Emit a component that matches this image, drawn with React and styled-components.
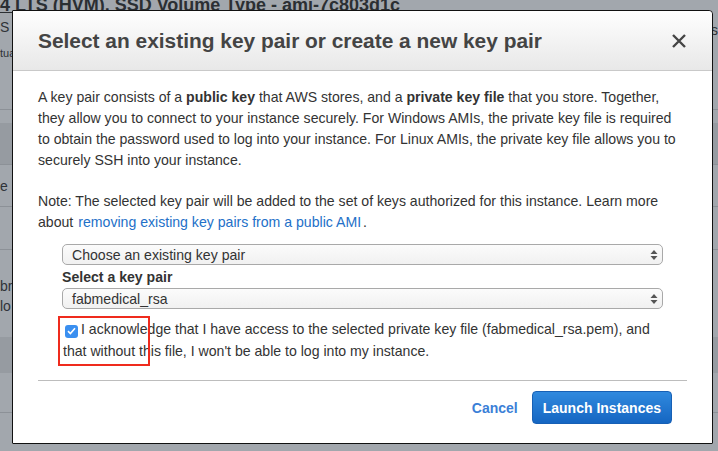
import React from "react";
import styled, { createGlobalStyle } from "styled-components";

const GlobalStyle = createGlobalStyle`
  html, body {
    margin: 0;
    padding: 0;
    background: #a2a7ad;
  }
  body {
    font-family: "Liberation Sans", Arial, sans-serif;
  }
`;

const Page = styled.div`
  position: relative;
  width: 718px;
  height: 451px;
  overflow: hidden;
  background: #a2a7ad;
`;

const Backdrop = styled.div`
  display: flex;
  flex-direction: column;
  height: 100%;
`;

const BackRow = styled.div`
  display: flex;
  justify-content: space-between;
  align-items: ${({ align }) => align || "center"};
  height: ${({ h }) => h}px;
  background: ${({ dark }) => (dark ? "#969ba1" : "transparent")};
  border-bottom: ${({ line }) => (line ? "1px solid #8c9197" : "none")};
  box-sizing: border-box;
  color: #2f3338;
  font-size: 14px;
`;

const BackStack = styled.div`
  display: flex;
  flex-direction: column;
  gap: ${({ gap }) => gap || 0}px;
  padding-top: ${({ top }) => top || 0}px;
`;

const TopTitle = styled.div`
  font-size: 18px;
  font-weight: bold;
  line-height: 20px;
  margin-top: -5px;
  text-decoration: underline;
  color: #2b2f33;
  white-space: nowrap;
`;

const BackText = styled.span`
  font-size: ${({ size }) => size || 14}px;
  line-height: ${({ size }) => (size || 14) + 6}px;
  white-space: nowrap;
`;

const Modal = styled.div`
  position: absolute;
  left: 12px;
  top: 10px;
  width: 701px;
  height: 434px;
  box-sizing: border-box;
  background: #fff;
  border: 1px solid #111;
  border-radius: 1px 4px 1px 1px;
  display: flex;
  flex-direction: column;
  color: #333;
`;

const Header = styled.div`
  height: 60px;
  box-sizing: border-box;
  display: flex;
  align-items: center;
  justify-content: space-between;
  padding: 0 26px 0 25px;
  background: linear-gradient(#fefefe, #e8e8e8);
  border-bottom: 1px solid #c9c9c9;
  border-radius: 0 4px 0 0;
`;

const Title = styled.h3`
  margin: 0;
  font-size: 20.9px;
  font-weight: bold;
  color: #444;
`;

const CloseButton = styled.button`
  background: none;
  border: none;
  padding: 0;
  width: 14px;
  height: 14px;
  display: flex;
  cursor: pointer;
`;

const Body = styled.div`
  padding: 16px 25px 0 25px;
  font-size: 14.1px;
  line-height: 21px;
  color: #333;
`;

const Para = styled.p`
  margin: 0 0 20px;
`;

const Link = styled.a`
  color: #2370c8;
  text-decoration: none;
  margin: 0 2px 0 5px;
`;

const Form = styled.div`
  position: relative;
  padding: 0 49px 0 49px;
  margin-top: -9px;
  display: flex;
  flex-direction: column;
  font-size: 14.1px;
  color: #333;
`;

const SelectBox = styled.div`
  height: 21px;
  box-sizing: border-box;
  border: 1px solid #a9a9a9;
  border-radius: 5px;
  background: linear-gradient(#fbfbfb, #f1f1f1);
  display: flex;
  align-items: center;
  justify-content: space-between;
  padding: 0 4px 0 9px;
  color: #333;
`;

const FieldLabel = styled.div`
  font-weight: bold;
  line-height: 22px;
  margin-top: 1px;
`;

const CheckRow = styled.div`
  margin-top: 9px;
  padding-left: 1px;
  line-height: 22px;
`;

const Check = styled.span`
  display: inline-flex;
  align-items: center;
  justify-content: center;
  width: 13px;
  height: 13px;
  border-radius: 3px;
  background: #3a8ff0;
  vertical-align: -1px;
  margin: 0 3px 0 2px;
`;

const Highlight = styled.div`
  position: absolute;
  left: 45px;
  top: 72px;
  width: 92px;
  height: 50px;
  border: 2px solid #ef2b1d;
  box-sizing: border-box;
`;

const Rule = styled.hr`
  margin: 18px 25px 0;
  border: none;
  border-top: 1px solid #bdbdbd;
`;

const Footer = styled.div`
  display: flex;
  justify-content: flex-end;
  align-items: center;
  gap: 14px;
  padding: 10px 40px 0 0;
`;

const CancelButton = styled.button`
  background: none;
  border: none;
  padding: 0;
  font-family: "Liberation Sans", Arial, sans-serif;
  font-size: 14px;
  font-weight: bold;
  color: #3b7fd7;
  cursor: pointer;
`;

const PrimaryButton = styled.button`
  height: 33px;
  padding: 0 10px;
  border: 1px solid #1760b5;
  border-radius: 4px;
  background: linear-gradient(#3089de, #1566c2);
  color: #fff;
  font-family: "Liberation Sans", Arial, sans-serif;
  font-size: 14px;
  font-weight: bold;
  cursor: pointer;
`;

const Arrows = () => (
  <svg width="8" height="12" viewBox="0 0 8 12">
    <path d="M4 1 L7.5 5 L0.5 5 Z" fill="#555" />
    <path d="M4 11 L7.5 7 L0.5 7 Z" fill="#555" />
  </svg>
);

const Select = ({ value }) => (
  <SelectBox>
    <span>{value}</span>
    <Arrows />
  </SelectBox>
);

export default function App() {
  return (
    <Page>
      <GlobalStyle />
      <Backdrop>
        <BackRow h={110} line align="flex-start">
          <BackStack>
            <TopTitle>4 LTS (HVM), SSD Volume Type - ami-7c803d1c</TopTitle>
            <BackStack top={2} gap={8}>
              <BackText>S (</BackText>
              <BackText size={11}>tua</BackText>
            </BackStack>
          </BackStack>
          <BackStack top={20}>
            <BackText>s</BackText>
          </BackStack>
        </BackRow>
        <BackRow h={13} />
        <BackRow h={42} dark line />
        <BackRow h={42} line>
          <BackText>e</BackText>
        </BackRow>
        <BackRow h={43} line />
        <BackRow h={87} align="flex-start">
          <BackStack top={26}>
            <BackText>br</BackText>
            <BackText>lo</BackText>
          </BackStack>
          <BackStack top={96}>
            <BackText>r</BackText>
          </BackStack>
        </BackRow>
        <BackRow h={36} dark />
        <BackRow h={40} line />
      </Backdrop>

      <Modal>
        <Header>
          <Title>Select an existing key pair or create a new key pair</Title>
          <CloseButton aria-label="Close">
            <svg width="14" height="14" viewBox="0 0 14 14">
              <path d="M1 1 L13 13 M13 1 L1 13" stroke="#444" strokeWidth="2.4" />
            </svg>
          </CloseButton>
        </Header>
        <Body>
          <Para>
            A key pair consists of a <b>public key</b> that AWS stores, and a{" "}
            <b>private key file</b> that you store. Together, they allow you to
            connect to your instance securely. For Windows AMIs, the private key
            file is required to obtain the password used to log into your
            instance. For Linux AMIs, the private key file allows you to
            securely SSH into your instance.
          </Para>
          <Para>
            Note: The selected key pair will be added to the set of keys
            authorized for this instance. Learn more about
            <Link href="#">removing existing key pairs from a public AMI</Link>.
          </Para>
        </Body>
        <Form>
          <Select value="Choose an existing key pair" />
          <FieldLabel>Select a key pair</FieldLabel>
          <Select value="fabmedical_rsa" />
          <CheckRow>
            <Check>
              <svg width="9" height="8" viewBox="0 0 9 8">
                <path d="M1 4.2 L3.4 6.5 L8 1.3" stroke="#fff" strokeWidth="1.6" fill="none" />
              </svg>
            </Check>
            I acknowledge that I have access to the selected private key file
            (fabmedical_rsa.pem), and that without this file, I won't be able to
            log into my instance.
          </CheckRow>
          <Highlight />
        </Form>
        <Rule />
        <Footer>
          <CancelButton>Cancel</CancelButton>
          <PrimaryButton>Launch Instances</PrimaryButton>
        </Footer>
      </Modal>
    </Page>
  );
}
